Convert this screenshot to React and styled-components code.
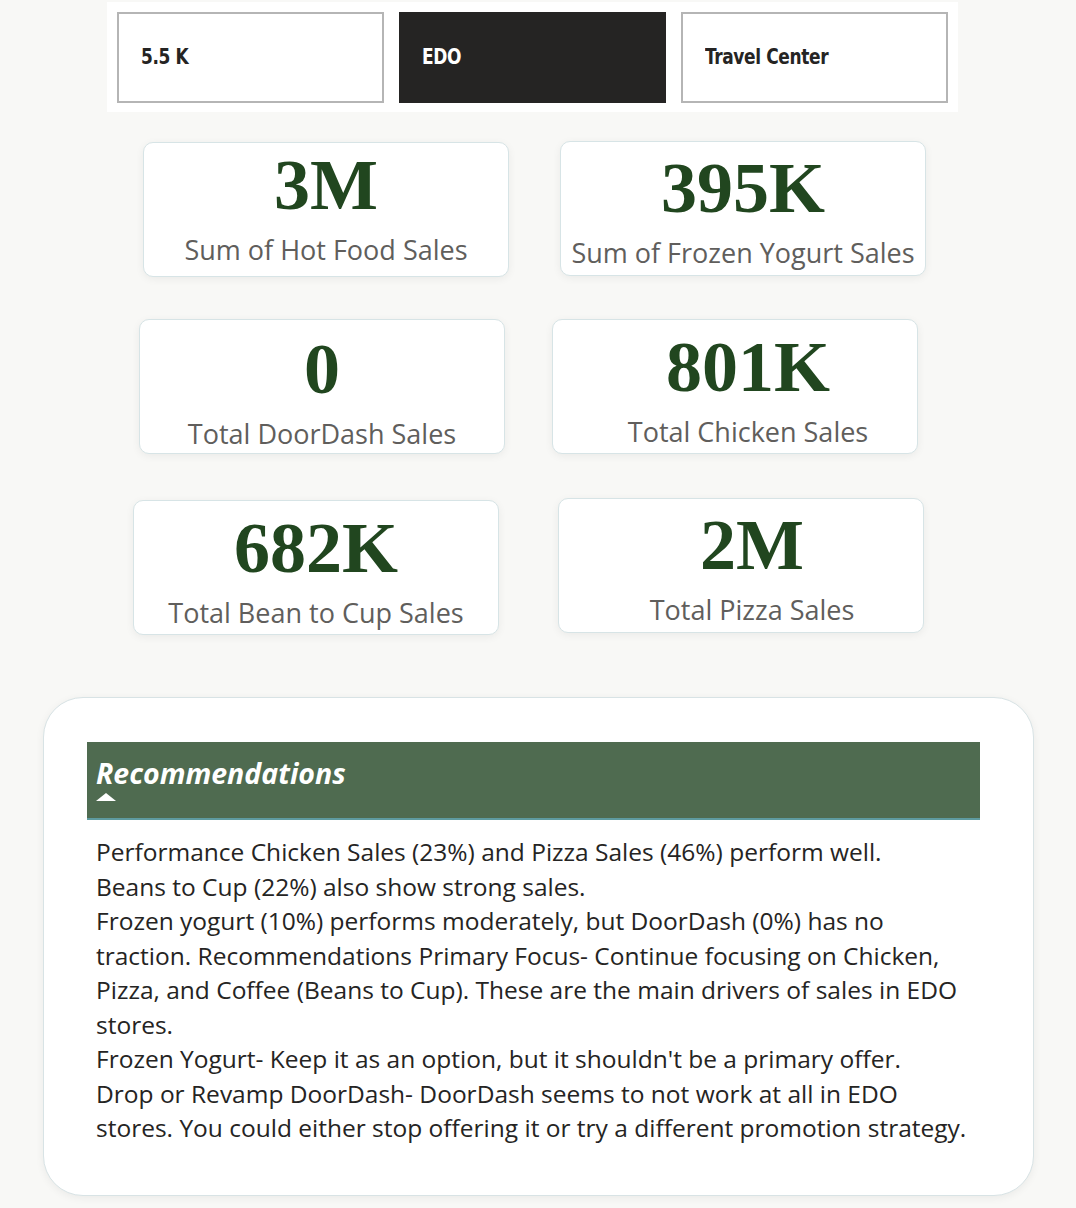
import React from 'react';
import styled, { createGlobalStyle } from 'styled-components';

const GlobalStyle = createGlobalStyle`
  html, body {
    margin: 0;
    padding: 0;
    background: #f8f8f6;
  }
  #root {
    min-height: 1208px;
  }
`;

const Page = styled.div`
  width: 1076px;
  min-height: 1208px;
  background: #f8f8f6;
  padding-top: 2px;
  box-sizing: border-box;
`;

const SlicerPanel = styled.div`
  margin-left: 107px;
  width: 851px;
  height: 110px;
  background: #ffffff;
  display: flex;
  align-items: center;
  gap: 15px;
  padding-left: 10px;
  box-sizing: border-box;
`;

const SlicerButton = styled.div`
  width: 267px;
  height: 91px;
  box-sizing: border-box;
  border: ${p => (p.active ? 'none' : '2px solid #b5b5b5')};
  background: ${p => (p.active ? '#252423' : '#ffffff')};
  color: ${p => (p.active ? '#ffffff' : '#252423')};
  display: flex;
  align-items: center;
  padding-left: ${p => (p.active ? '23px' : '22px')};
  font-family: "DejaVu Sans Condensed", "DejaVu Sans", sans-serif;
  font-stretch: condensed;
  font-weight: 700;
  font-size: 21px;
  letter-spacing: -0.4px;
`;

const SlicerText = styled.span`
  display: inline-block;
  transform: scaleX(0.9);
  transform-origin: left center;
  white-space: nowrap;
`;

const CardRow = styled.div`
  display: flex;
  align-items: flex-start;
  margin-top: ${p => p.top}px;
  padding-left: ${p => p.left}px;
  gap: ${p => p.gap}px;
`;

const Card = styled.div`
  width: 366px;
  height: 135px;
  box-sizing: border-box;
  margin-top: ${p => p.shift || 0}px;
  background: #ffffff;
  border: 1.5px solid #d7e4e6;
  border-radius: 10px;
  box-shadow: 0 2px 8px rgba(0, 0, 0, 0.06);
  display: flex;
  flex-direction: column;
  align-items: center;
  padding-top: ${p => p.pt}px;
  padding-left: ${p => (p.dx || 0) * 2}px;
`;

const Value = styled.div`
  font-family: "Liberation Serif", "Times New Roman", serif;
  font-weight: 700;
  font-size: 72px;
  line-height: 72px;
  color: #21461f;
`;

const Label = styled.div`
  font-family: "Open Sans", "Segoe UI", sans-serif;
  font-size: 27px;
  line-height: 27px;
  color: #605e5c;
  margin-top: 15px;
  white-space: nowrap;
`;

const RecPanel = styled.div`
  margin-top: 62px;
  margin-left: 43px;
  width: 991px;
  height: 499px;
  box-sizing: border-box;
  background: #ffffff;
  border: 1.5px solid #d8e3e5;
  border-radius: 40px;
  box-shadow: 0 2px 8px rgba(0, 0, 0, 0.06);
  padding: 44px 53px 0 43px;
`;

const RecHeader = styled.div`
  height: 78px;
  box-sizing: border-box;
  background: #4f6b50;
  border-bottom: 2px solid #5e9ba0;
  padding: 14px 9px 0;
`;

const RecTitle = styled.div`
  font-family: "Open Sans", "Segoe UI", sans-serif;
  font-style: italic;
  font-weight: 700;
  font-size: 28.5px;
  line-height: 34px;
  color: #ffffff;
  letter-spacing: 0;
`;

const Caret = styled.div`
  width: 0;
  height: 0;
  margin-top: 3px;
  border-left: 10px solid transparent;
  border-right: 10px solid transparent;
  border-bottom: 8px solid #ffffff;
`;

const RecBody = styled.p`
  margin: 0;
  padding: 15px 0 0 9px;
  font-family: "Open Sans", "Segoe UI", sans-serif;
  font-size: 24.5px;
  line-height: 34.5px;
  color: #252423;
  white-space: nowrap;
`;

const cards = [
  {
    top: 30, left: 143, gap: 51,
    items: [
      { value: '3M', label: 'Sum of Hot Food Sales', pt: 6, shift: 0 },
      { value: '395K', label: 'Sum of Frozen Yogurt Sales', pt: 10, shift: -1 },
    ],
  },
  {
    top: 42, left: 139, gap: 47,
    items: [
      { value: '0', label: 'Total DoorDash Sales', pt: 13, shift: 0 },
      { value: '801K', label: 'Total Chicken Sales', pt: 11, shift: 0, dx: 13 },
    ],
  },
  {
    top: 44, left: 133, gap: 59,
    items: [
      { value: '682K', label: 'Total Bean to Cup Sales', pt: 11, shift: 2 },
      { value: '2M', label: 'Total Pizza Sales', pt: 10, shift: 0, dx: 11 },
    ],
  },
];

const lines = [
  'Performance Chicken Sales (23%) and Pizza Sales (46%) perform well.',
  'Beans to Cup (22%) also show strong sales.',
  'Frozen yogurt (10%) performs moderately, but DoorDash (0%) has no',
  'traction. Recommendations Primary Focus- Continue focusing on Chicken,',
  'Pizza, and Coffee (Beans to Cup). These are the main drivers of sales in EDO',
  'stores.',
  "Frozen Yogurt- Keep it as an option, but it shouldn't be a primary offer.",
  'Drop or Revamp DoorDash- DoorDash seems to not work at all in EDO',
  'stores. You could either stop offering it or try a different promotion strategy.',
];

export default function App() {
  return (
    <Page>
      <GlobalStyle />
      <SlicerPanel>
        <SlicerButton><SlicerText>5.5 K</SlicerText></SlicerButton>
        <SlicerButton active><SlicerText>EDO</SlicerText></SlicerButton>
        <SlicerButton><SlicerText>Travel Center</SlicerText></SlicerButton>
      </SlicerPanel>

      {cards.map((row, i) => (
        <CardRow key={i} top={row.top} left={row.left} gap={row.gap}>
          {row.items.map(c => (
            <Card key={c.label} pt={c.pt} shift={c.shift} dx={c.dx}>
              <Value>{c.value}</Value>
              <Label>{c.label}</Label>
            </Card>
          ))}
        </CardRow>
      ))}

      <RecPanel>
        <RecHeader>
          <RecTitle>Recommendations</RecTitle>
          <Caret />
        </RecHeader>
        <RecBody>
          {lines.map((l, i) => (
            <React.Fragment key={i}>
              {l}
              {i < lines.length - 1 && <br />}
            </React.Fragment>
          ))}
        </RecBody>
      </RecPanel>
    </Page>
  );
}
